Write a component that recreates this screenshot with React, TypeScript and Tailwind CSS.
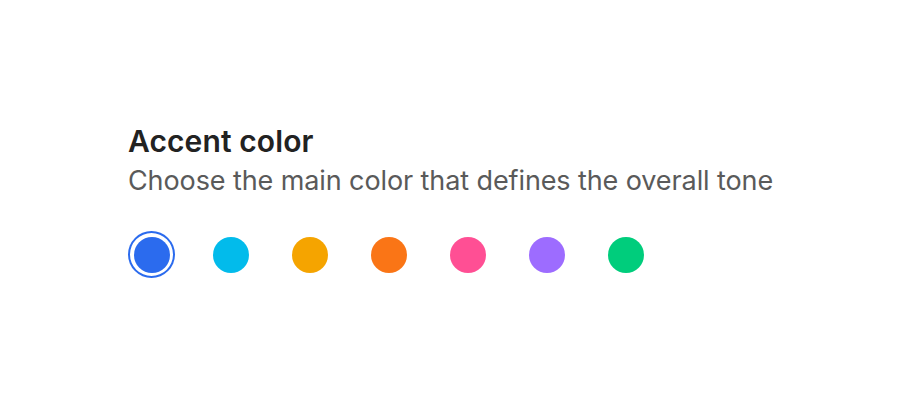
import React, { useState } from 'react';

const colors = [
  { name: 'blue', cls: 'bg-[#2b6bee]', ring: 'ring-[#2b6bee]' },
  { name: 'sky', cls: 'bg-[#02bbeb]', ring: 'ring-[#02bbeb]' },
  { name: 'amber', cls: 'bg-[#f5a400]', ring: 'ring-[#f5a400]' },
  { name: 'orange', cls: 'bg-[#fa7516]', ring: 'ring-[#fa7516]' },
  { name: 'pink', cls: 'bg-[#ff4f94]', ring: 'ring-[#ff4f94]' },
  { name: 'violet', cls: 'bg-[#9d6cff]', ring: 'ring-[#9d6cff]' },
  { name: 'green', cls: 'bg-[#00cd7c]', ring: 'ring-[#00cd7c]' },
];

export default function App() {
  const [selected, setSelected] = useState('blue');

  return (
    <div className="w-[900px] h-[406px] bg-white font-['Inter',sans-serif] pl-[128px] pt-[123px]">
      <h2 className="text-[30px] leading-[36px] font-semibold text-[#222222] tracking-[0.1px]">Accent color</h2>
      <p className="text-[27px] leading-[32px] text-[#5a5a5a] mt-[6px] tracking-[-0.1px]">
        Choose the main color that defines the overall tone
      </p>
      <div className="flex items-center gap-[32px] mt-[34px]">
        {colors.map((c) => (
          <button
            key={c.name}
            onClick={() => setSelected(c.name)}
            className={`w-[47px] h-[47px] rounded-full flex items-center justify-center ${
              selected === c.name ? `ring-2 ring-inset ${c.ring}` : ''
            }`}
          >
            <span className={`w-[36px] h-[36px] rounded-full ${c.cls}`} />
          </button>
        ))}
      </div>
    </div>
  );
}
